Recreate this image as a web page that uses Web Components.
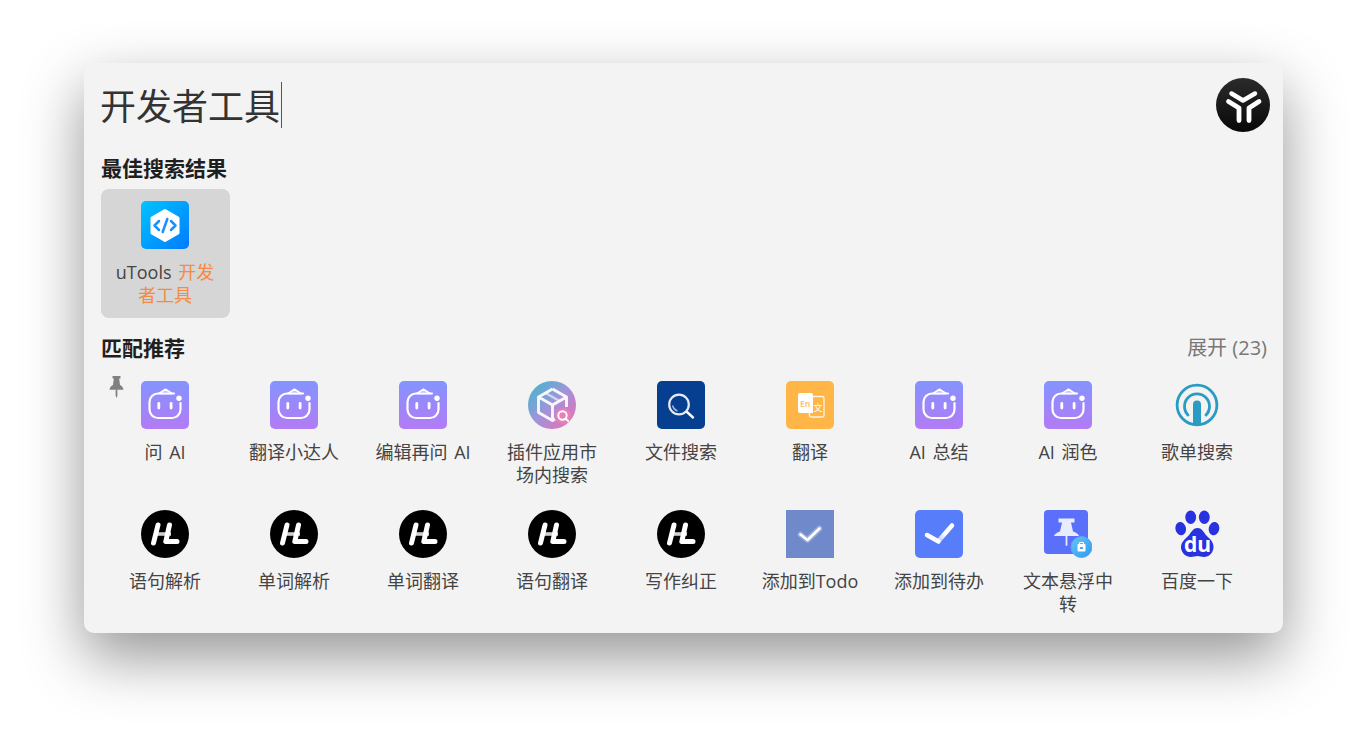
<!DOCTYPE html>
<html lang="zh-CN">
<head>
<meta charset="utf-8">
<title>uTools</title>
<style>
    html, body { margin: 0; height: 100%; background: #fff; overflow: hidden; }
    body {
        padding: 63px 84px 0 84px;
        box-sizing: border-box;
        font-family: "Open Sans", "Noto Sans CJK SC", sans-serif;
    }
</style>
</head>
<body>
<u-window>
    <u-search slot="search" value="开发者工具"></u-search>
    <u-section title="最佳搜索结果">
        <u-tile icon="dev" selected>uTools <u-hl>开发</u-hl><u-hl>者工具</u-hl></u-tile>
    </u-section>
    <u-section title="匹配推荐" more="展开 (23)" pinned>
        <u-tile icon="robot">问 AI</u-tile>
        <u-tile icon="robot">翻译小达人</u-tile>
        <u-tile icon="robot">编辑再问 AI</u-tile>
        <u-tile icon="store">插件应用市场内搜索</u-tile>
        <u-tile icon="filesearch">文件搜索</u-tile>
        <u-tile icon="translate">翻译</u-tile>
        <u-tile icon="robot">AI 总结</u-tile>
        <u-tile icon="robot">AI 润色</u-tile>
        <u-tile icon="song">歌单搜索</u-tile>
        <u-tile icon="hl">语句解析</u-tile>
        <u-tile icon="hl">单词解析</u-tile>
        <u-tile icon="hl">单词翻译</u-tile>
        <u-tile icon="hl">语句翻译</u-tile>
        <u-tile icon="hl">写作纠正</u-tile>
        <u-tile icon="todo">添加到Todo</u-tile>
        <u-tile icon="todo2">添加到待办</u-tile>
        <u-tile icon="float">文本悬浮中转</u-tile>
        <u-tile icon="baidu">百度一下</u-tile>
    </u-section>
</u-window>

<script>
const ICONS = {
    dev: `<defs><linearGradient id="g" x1="0" y1="0" x2="1" y2="1"><stop offset="0" stop-color="#00c4ff"/><stop offset="1" stop-color="#007bff"/></linearGradient></defs>
        <rect width="48" height="48" rx="5" fill="url(#g)"/>
        <path d="M24 9.500 37 17v15l-13 7.500L11 32V17z" fill="#fff" stroke="#fff" stroke-width="3" stroke-linejoin="round"/>
        <path d="M18 20 13.500 24.500l4.500 4.500M30 20l4.500 4.500-4.500 4.500M26.300 18l-4.600 13" fill="none" stroke="#1a90ff" stroke-width="2.500" stroke-linecap="round" stroke-linejoin="round"/>`,
    robot: `<defs><linearGradient id="g" x1="0" y1="0" x2="0" y2="1"><stop offset="0" stop-color="#8494ff"/><stop offset="1" stop-color="#b27bf5"/></linearGradient></defs>
        <rect width="48" height="48" rx="5" fill="url(#g)"/>
        <path d="M33 12.500H17a8.500 8.500 0 0 0-8.500 8.500v7.500a8.500 8.500 0 0 0 8.500 8.500h14a8.500 8.500 0 0 0 8.500-8.500v-6.500" fill="none" stroke="#fff" stroke-width="2.200" stroke-linecap="round"/>
        <path d="M18 12.500l6.500-4.300 6.500 4.300z" fill="#c9c6ff" stroke="#fff" stroke-width="1.600" stroke-linejoin="round"/>
        <circle cx="38" cy="17.200" r="2.700" fill="#fff"/>
        <rect x="16.400" y="21" width="2.800" height="7.500" rx="1.400" fill="#fff"/>
        <rect x="28.700" y="21" width="2.800" height="7.500" rx="1.400" fill="#fff"/>`,
    store: `<defs><linearGradient id="g" x1="0" y1="0" x2="1" y2="1"><stop offset="0" stop-color="#33bdcc"/><stop offset=".5" stop-color="#a293da"/><stop offset="1" stop-color="#f26aae"/></linearGradient></defs>
        <circle cx="24" cy="24" r="24" fill="url(#g)"/>
        <path d="M24.500 8 38.500 16v10M24.500 8 10.500 16v15.500l14 8 2.500-1.500M10.500 16l14 8 14-8M24.500 24v15" fill="none" stroke="#fff" stroke-width="2.900" stroke-linejoin="round" stroke-opacity=".92"/>
        <path d="M17.500 12l14 8" stroke="#fff" stroke-width="2.200" fill="none" opacity=".6"/>
        <circle cx="35" cy="35" r="8" fill="#e77fb8"/>
        <circle cx="34.500" cy="34.500" r="4.200" fill="none" stroke="#fff" stroke-width="1.900"/>
        <path d="M37.500 37.500l2.700 2.700" stroke="#fff" stroke-width="1.900" stroke-linecap="round"/>`,
    filesearch: `<rect width="48" height="48" rx="5" fill="#073f90"/>
        <circle cx="22" cy="23.500" r="9.800" fill="none" stroke="#e4ebf6" stroke-width="2.200"/>
        <path d="M15.800 25a6.800 6.800 0 0 0 4.200 4.800" fill="none" stroke="#9fb6dc" stroke-width="1.500" stroke-linecap="round"/>
        <path d="M30 31l6 5.500" stroke="#fff" stroke-width="2.400" stroke-linecap="round"/>`,
    translate: `<rect width="48" height="48" rx="5" fill="#ffb647"/>
        <rect x="23.500" y="15.500" width="14.500" height="20.500" rx="1.500" fill="none" stroke="#fff" stroke-width="1.300" opacity=".85"/>
        <path d="M14 12H25a2 2 0 0 1 2 2V32H14a2 2 0 0 1-2-2v-16a2 2 0 0 1 2-2z" fill="#fff"/>
        <text x="19.300" y="25.500" text-anchor="middle" font-size="8.500" font-weight="700" font-family="Open Sans, sans-serif" fill="#ffc570">En</text>
        <text x="32" y="30" text-anchor="middle" font-size="9" font-family="Noto Sans CJK SC, sans-serif" fill="#fff">文</text>`,
    song: `<circle cx="24" cy="24" r="19.900" fill="none" stroke="#2a9bc2" stroke-width="2.800"/>
        <path d="M15 34a12.500 12.500 0 1 1 18 0" fill="none" stroke="#2a9bc2" stroke-width="2.800" stroke-linecap="round"/>
        <path d="M20 44V23.500a4 4 0 0 1 8 0V44z" fill="#2a9bc2"/>`,
    hl: `<circle cx="24" cy="24" r="24" fill="#000"/>
        <path d="M16 24h14" stroke="#cfcfcf" stroke-width="3.600"/>
        <path d="M17 15 12.500 33M28.500 15 24.800 31.500H36" fill="none" stroke="#fff" stroke-width="5" stroke-linecap="round" stroke-linejoin="round"/>`,
    todo: `<rect width="48" height="48" fill="#7089cb"/>
        <path d="M14.500 24.500l7 5.500 12-11.500" fill="none" stroke="#fff" stroke-opacity=".25" stroke-width="6" stroke-linecap="round" stroke-linejoin="round"/>
        <path d="M14.500 24.500l7 5.500 12-11.500" fill="none" stroke="#fff" stroke-width="2.800" stroke-linecap="round" stroke-linejoin="round"/>`,
    todo2: `<defs><linearGradient id="g" gradientUnits="userSpaceOnUse" x1="23" y1="31" x2="37" y2="15"><stop offset="0" stop-color="#b5c6fd"/><stop offset=".5" stop-color="#fff"/></linearGradient></defs>
        <rect width="48" height="48" rx="5" fill="#587dfb"/>
        <path d="M23.500 31 37 15.500" fill="none" stroke="url(#g)" stroke-width="4.500" stroke-linecap="round"/>
        <path d="M12 25l11.500 6.500" fill="none" stroke="#fff" stroke-width="4.500" stroke-linecap="round"/>`,
    float: `<defs><linearGradient id="g" x1="0" y1="0" x2="1" y2="1"><stop offset="0" stop-color="#66c6f8"/><stop offset="1" stop-color="#2e9af0"/></linearGradient></defs>
        <rect width="44" height="44" rx="4" fill="#5a70fb"/>
        <path d="M14.500 8.500h16v4h-3.500l2 9c3 1 5.500 2.500 6 4.500h-25c.5-2 3-3.500 6-4.500l2-9h-3.500z" fill="#e9ecff"/>
        <path d="M22.500 26v9" stroke="#e9ecff" stroke-width="1.800" stroke-linecap="round"/>
        <circle cx="37.500" cy="37" r="10.500" fill="url(#g)" stroke="#5aa5f5" stroke-width="1"/>
        <rect x="33.500" y="34" width="8" height="7.500" rx="1" fill="#fff"/>
        <path d="M35.500 34v-1.500h4V34" fill="none" stroke="#fff" stroke-width="1"/>
        <rect x="36" y="37" width="3" height="2" fill="#4aa5f2"/>`,
    baidu: `<g fill="#2932e1"><ellipse cx="17.700" cy="7.300" rx="5.400" ry="6.800"/><ellipse cx="31.300" cy="7.300" rx="5.400" ry="6.800"/>
        <ellipse cx="7.700" cy="18.600" rx="5.300" ry="6.700" transform="rotate(-12 7.700 18.600)"/><ellipse cx="41" cy="18.600" rx="5.300" ry="6.700" transform="rotate(12 41 18.600)"/>
        <path d="M24.500 18c4 0 6 3.500 8 6.500 2.500 3 8.500 6.500 8 13-.4 5.500-4.500 9.500-9.500 9.500-2.500 0-4.500-1-6.500-1s-4 1-6.500 1c-5 0-9.500-4-10-9 -.5-6.500 6-10.500 8.500-13.500 2-3 4-6.500 8-6.500z"/></g>
        <text x="24.500" y="42" text-anchor="middle" font-size="21" font-weight="700" font-family="Open Sans, sans-serif" fill="#fff">du</text>`
};

class UWindow extends HTMLElement {
    constructor() {
        super();
        this.attachShadow({ mode: 'open' });
    }
    connectedCallback() {
        this.shadowRoot.innerHTML = `
            <style>
            :host {
                display: block;
                width: 1199px;
                height: 570px;
                box-sizing: border-box;
                padding: 0 16px 0 17px;
                background: #f3f3f3;
                border-radius: 10px;
                box-shadow: 0 24px 60px rgba(0, 0, 0, .42);
            }
            </style>
            <slot name="search"></slot>
            <slot></slot>`;
    }
}

class USearch extends HTMLElement {
    constructor() {
        super();
        this.attachShadow({ mode: 'open' });
    }
    connectedCallback() {
        this.shadowRoot.innerHTML = `
            <style>
            :host {
                display: flex;
                justify-content: space-between;
                align-items: flex-start;
                height: 89px;
                padding-top: 15px;
                box-sizing: border-box;
            }
            .text {
                margin: 4px 0 0 -1px;
                padding-right: 1px;
                height: 46px;
                line-height: 50px;
                font-size: 36px;
                color: #333;
                border-right: 1px solid #555;
            }
            .avatar { display: block; margin-right: -3px; }
            </style>
            <div class="text">${this.getAttribute('value')}</div>
            <svg class="avatar" width="54" height="54" viewBox="0 0 54 54">
                <defs><linearGradient id="a" x1="0" y1="0" x2="0" y2="1"><stop offset="0" stop-color="#2b2b2b"/><stop offset="1" stop-color="#080808"/></linearGradient></defs>
                <circle cx="27" cy="27" r="27" fill="url(#a)"/>
                <path d="M15.500 15.500 27 22.500l12-7" fill="none" stroke="#fff" stroke-width="4.500" stroke-linecap="round" stroke-linejoin="round"/>
                <path d="M12.500 23.500l10.500 6.500v12.500M43 23.500 33 30v12.500" fill="none" stroke="#fff" stroke-width="4.800" stroke-linecap="round" stroke-linejoin="round"/>
            </svg>`;
    }
}

class USection extends HTMLElement {
    constructor() {
        super();
        this.attachShadow({ mode: 'open' });
    }
    connectedCallback() {
        const more = this.getAttribute('more');
        const pin = this.hasAttribute('pinned') ? `
            <svg class="pin" width="15" height="22" viewBox="0 0 17 23" preserveAspectRatio="none">
                <path d="M4 0h9v2.500h-1.500l1 7c2 1 3.500 2.500 4 5H.5c.5-2.500 2-4 4-5l1-7H4z" fill="#808080"/>
                <path d="M7.500 14h2v6.500L8.500 23l-1-2.500z" fill="#808080"/>
            </svg>` : '';
        this.shadowRoot.innerHTML = `
            <style>
            :host { display: block; }
            :host(:not(:first-of-type)) { margin-top: 14px; }
            header {
                display: flex;
                justify-content: space-between;
                align-items: center;
                height: 30px;
                margin-bottom: 7px;
            }
            h2 { margin: 0; font-size: 21px; font-weight: 700; color: #1f1f1f; }
            .more { font-size: 20px; color: #777; margin-top: -2px; margin-left: -1px; }
            .grid {
                position: relative;
                display: grid;
                grid-template-columns: repeat(9, 129px);
                grid-auto-rows: 129px;
            }
            .pin { position: absolute; left: 8px; top: 7px; }
            </style>
            <header><h2>${this.getAttribute('title')}</h2>${more ? `<span class="more">${more}</span>` : ''}</header>
            <div class="grid">${pin}<slot></slot></div>`;
    }
}

class UTile extends HTMLElement {
    constructor() {
        super();
        this.attachShadow({ mode: 'open' });
    }
    connectedCallback() {
        this.shadowRoot.innerHTML = `
            <style>
            :host {
                display: flex;
                flex-direction: column;
                align-items: center;
                box-sizing: border-box;
                width: 129px;
                height: 129px;
                padding: 12px 13px 0 12px;
                border-radius: 8px;
            }
            :host([selected]) { background: #d6d6d6; }
            svg { display: block; flex: none; }
            .label {
                margin-top: 12px;
                font-size: 18px;
                line-height: 23px;
                word-spacing: 2px;
                color: #444;
                text-align: center;
            }
            </style>
            <svg width="48" height="48" viewBox="0 0 48 48">${ICONS[this.getAttribute('icon')]}</svg>
            <div class="label"><slot></slot></div>`;
    }
}

class UHl extends HTMLElement {
    constructor() {
        super();
        this.attachShadow({ mode: 'open' });
        this.shadowRoot.innerHTML = `<style>:host { color: #f58a42; }</style><slot></slot>`;
    }
}

customElements.define('u-window', UWindow);
customElements.define('u-search', USearch);
customElements.define('u-section', USection);
customElements.define('u-tile', UTile);
customElements.define('u-hl', UHl);
</script>
</body>
</html>
